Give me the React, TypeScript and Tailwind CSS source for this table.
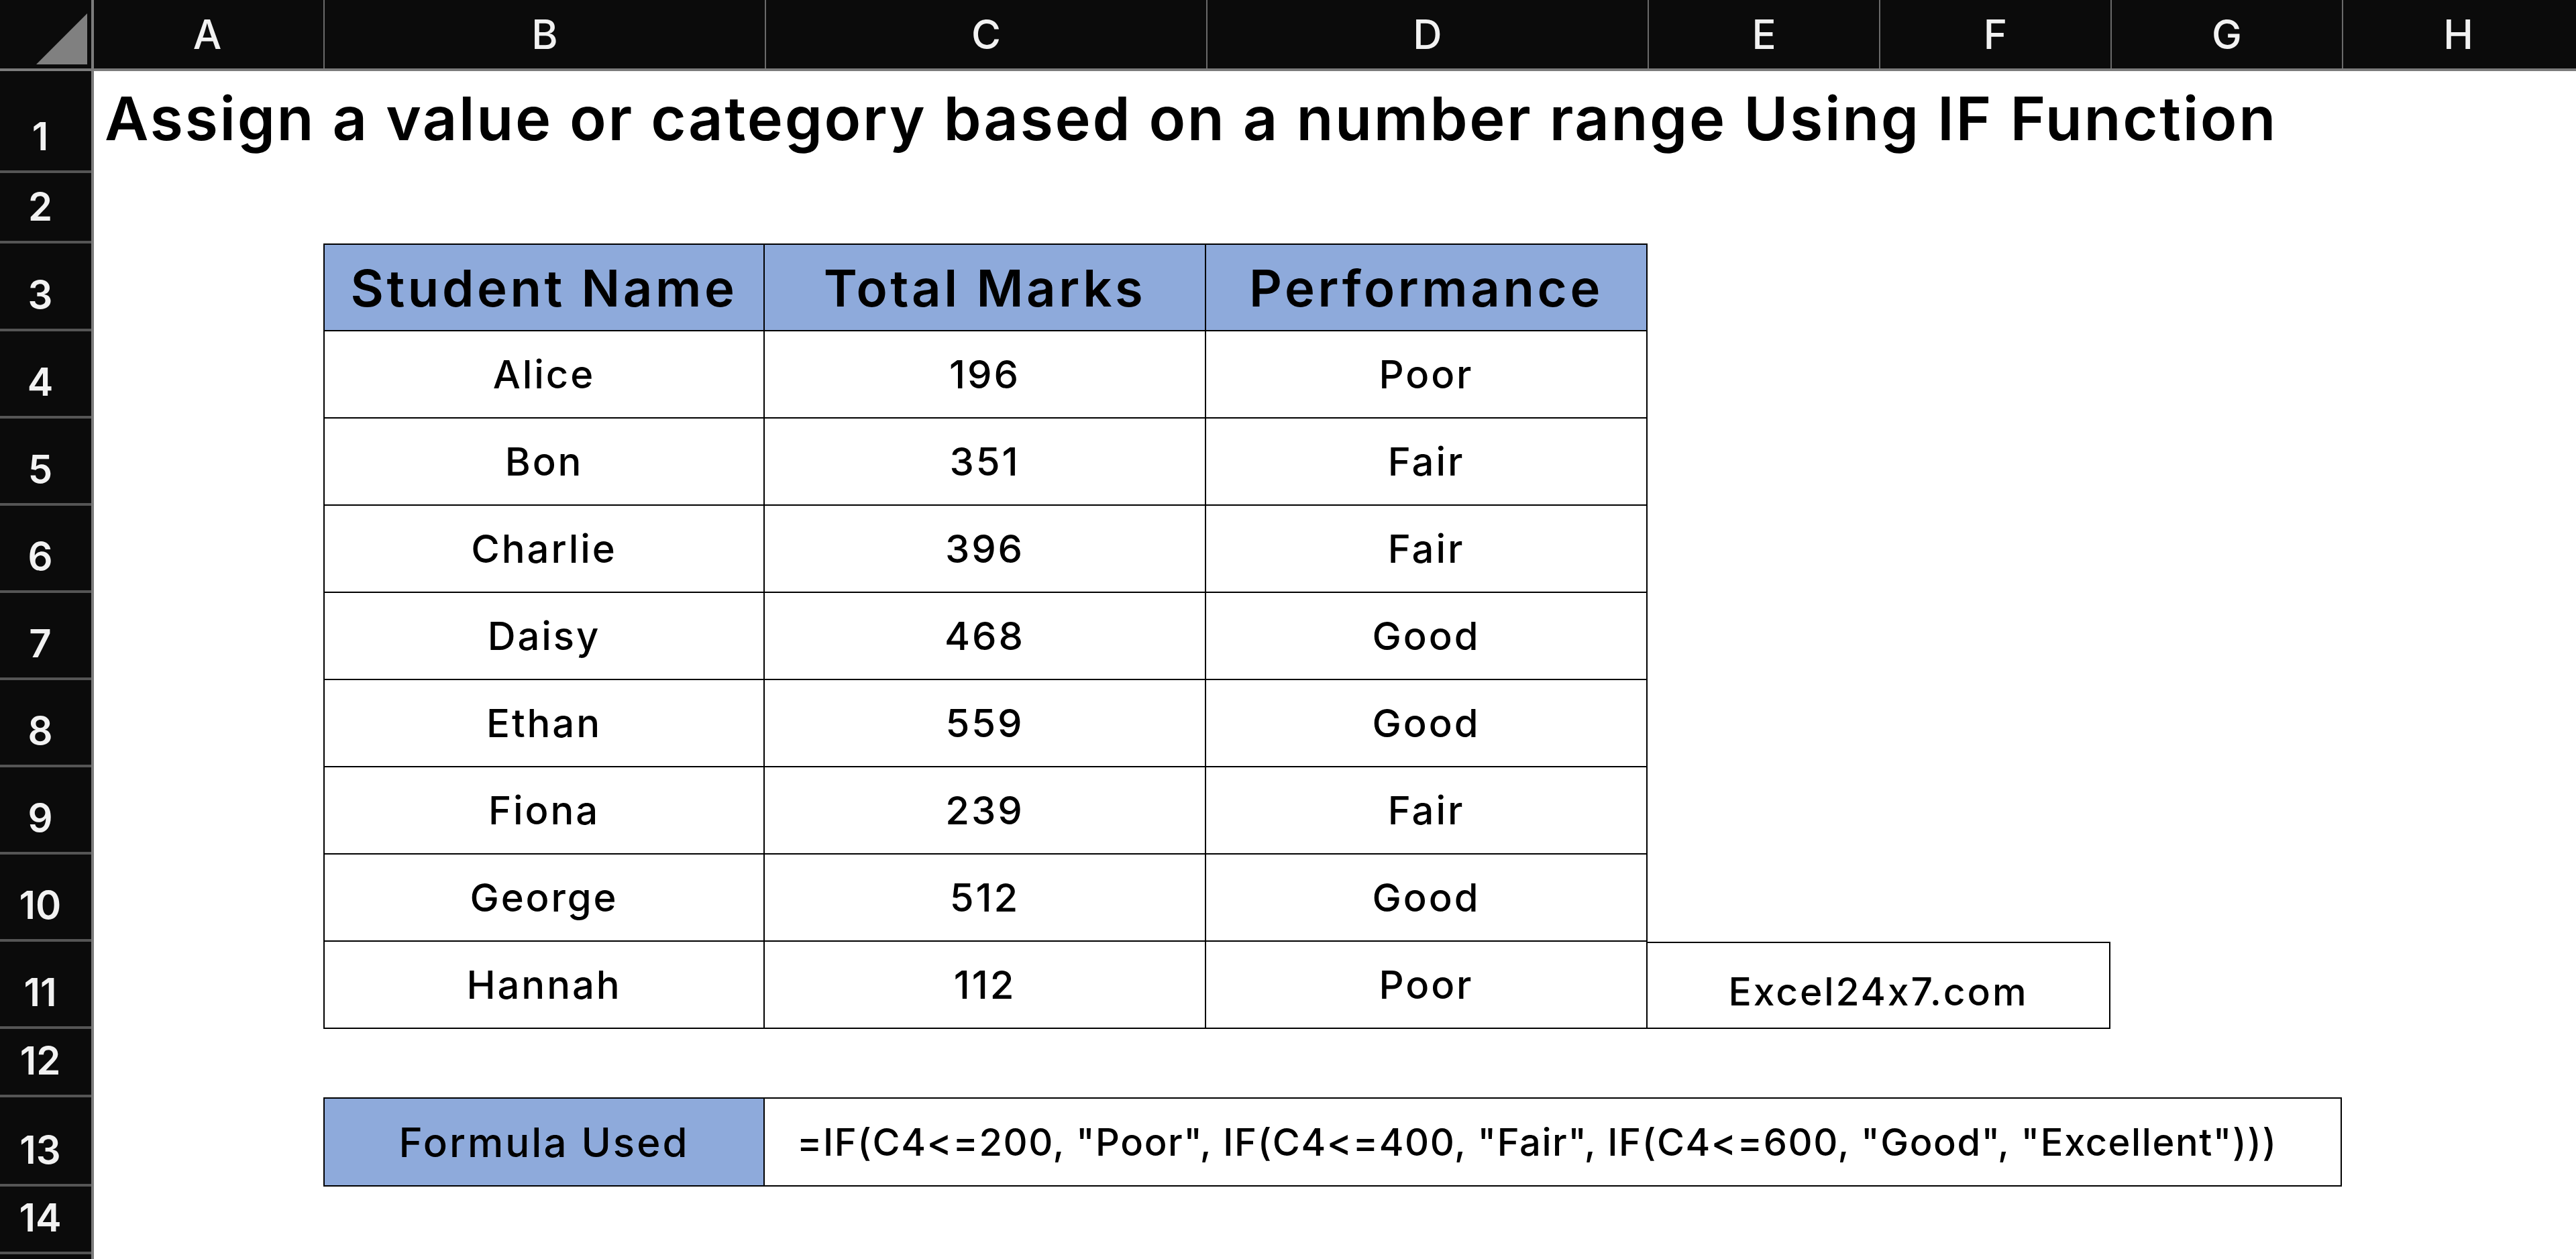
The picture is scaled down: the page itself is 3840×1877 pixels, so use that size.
const columns = [
  { label: 'A', w: 'w-[346px]' },
  { label: 'B', w: 'w-[658px]' },
  { label: 'C', w: 'w-[658px]' },
  { label: 'D', w: 'w-[658px]' },
  { label: 'E', w: 'w-[345px]' },
  { label: 'F', w: 'w-[345px]' },
  { label: 'G', w: 'w-[345px]' },
  { label: 'H', w: 'w-[345px]' },
];

const rowHeaders = [
  { n: '1', h: 'h-[152px]' },
  { n: '2', h: 'h-[105px]' },
  { n: '3', h: 'h-[131px]' },
  { n: '4', h: 'h-[130px]' },
  { n: '5', h: 'h-[130px]' },
  { n: '6', h: 'h-[130px]' },
  { n: '7', h: 'h-[130px]' },
  { n: '8', h: 'h-[130px]' },
  { n: '9', h: 'h-[130px]' },
  { n: '10', h: 'h-[130px]' },
  { n: '11', h: 'h-[130px]' },
  { n: '12', h: 'h-[102px]' },
  { n: '13', h: 'h-[133px]' },
  { n: '14', h: 'h-[101px]' },
  { n: '', h: 'h-[101px]' },
];

const students = [
  ['Alice', '196', 'Poor'],
  ['Bon', '351', 'Fair'],
  ['Charlie', '396', 'Fair'],
  ['Daisy', '468', 'Good'],
  ['Ethan', '559', 'Good'],
  ['Fiona', '239', 'Fair'],
  ['George', '512', 'Good'],
  ['Hannah', '112', 'Poor'],
];

const headers = ['Student Name', 'Total Marks', 'Performance'];

export default function App() {
  return (
    <div className="h-[1877px] w-[3840px] overflow-hidden bg-white font-['Inter',sans-serif] text-black">
      {/* column letters */}
      <div className="flex h-[106px] border-b-4 border-[#7c7c7c] bg-[#0b0b0b]">
        <div className="flex w-[140px] items-end justify-end border-r-4 border-[#7c7c7c] pb-[6px] pr-[6px]">
          <svg width="76" height="76" viewBox="0 0 76 76">
            <polygon points="76,0 76,76 0,76" fill="#808080" />
          </svg>
        </div>
        {columns.map((c, i) => (
          <div
            key={c.label}
            className={`flex items-center justify-center text-[60px] font-medium leading-none text-[#f2f2f2] ${c.w} ${
              i === 0 ? '-ml-[4px]' : 'border-l-2 border-[#6a6a6a]'
            }`}
          >
            {c.label}
          </div>
        ))}
      </div>

      <div className="flex">
        {/* row numbers */}
        <div className="flex w-[140px] shrink-0 flex-col border-r-4 border-[#7c7c7c] bg-[#0b0b0b]">
          {rowHeaders.map((r, i) => (
            <div
              key={i}
              className={`flex items-end justify-center border-b-4 border-[#555555] pb-[22px] pr-4 text-[58px] font-semibold leading-none text-[#f2f2f2] ${r.h}`}
            >
              {r.n}
            </div>
          ))}
        </div>

        {/* sheet */}
        <div className="-ml-[4px] grid grid-cols-[346px_658px_658px_658px_345px_345px_345px_345px] grid-rows-[152px_105px_131px_repeat(8,130px)_102px_133px_101px_1fr]">
          <div className="col-span-8 row-start-1 flex items-center whitespace-nowrap pb-3 pl-[20px] text-[90px] font-semibold tracking-[0.029em]">
            Assign a value or category based on a number range Using IF Function
          </div>

          <div className="col-start-2 col-span-3 row-start-3 row-span-9 grid grid-cols-3 grid-rows-[131px_repeat(8,130px)]">
            {headers.map((h, i) => (
              <div
                key={h}
                className={`flex items-center justify-center border-t-2 border-r-2 border-b-2 border-black bg-[#8eaadb] text-[76px] font-semibold tracking-[0.06em] ${
                  i === 0 ? 'border-l-2' : ''
                }`}
              >
                {h}
              </div>
            ))}
            {students.map((row) =>
              row.map((v, i) => (
                <div
                  key={row[0] + i}
                  className={`flex items-center justify-center border-r-2 border-b-2 border-black text-[58px] font-medium tracking-[0.05em] ${
                    i === 0 ? 'border-l-2' : ''
                  }`}
                >
                  {v}
                </div>
              )),
            )}
          </div>

          <div className="col-start-5 col-span-2 row-start-11 flex items-center justify-center border-t-2 border-r-2 border-b-2 border-black pt-5 text-[57px] font-medium tracking-[0.05em]">
            Excel24x7.com
          </div>

          <div className="col-start-2 row-start-13 flex items-center justify-center border-2 border-black bg-[#8eaadb] text-[60px] font-medium tracking-[0.05em]">
            Formula Used
          </div>
          <div className="col-start-3 col-span-5 row-start-13 flex items-center whitespace-nowrap border-t-2 border-r-2 border-b-2 border-black pl-[48px] text-[56px] font-medium tracking-[0.028em]">
            =IF(C4&lt;=200, "Poor", IF(C4&lt;=400, "Fair", IF(C4&lt;=600, "Good", "Excellent")))
          </div>
        </div>
      </div>
    </div>
  );
}
